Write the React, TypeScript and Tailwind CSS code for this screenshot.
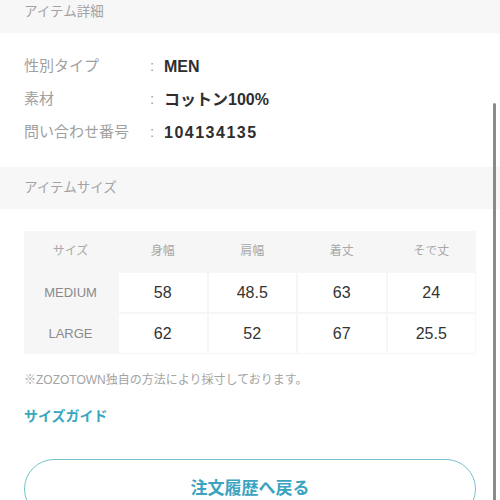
const FONT = { fontFamily: '"Liberation Sans", "Noto Sans CJK JP", sans-serif' };

const details = [
  { label: "性別タイプ", value: "MEN", wide: false },
  { label: "素材", value: "コットン100%", wide: false },
  { label: "問い合わせ番号", value: "104134135", wide: true },
];

const columns = ["サイズ", "身幅", "肩幅", "着丈", "そで丈"];

const rows = [
  { size: "MEDIUM", values: ["58", "48.5", "63", "24"] },
  { size: "LARGE", values: ["62", "52", "67", "25.5"] },
];

function SectionHeader({ title, className = "" }: { title: string; className?: string }) {
  return (
    <div className={`flex h-[42px] items-center bg-[#f7f7f7] px-6 text-[13.5px] text-[#a3a3a3] ${className}`}>
      {title}
    </div>
  );
}

export default function App() {
  return (
    <div className="relative h-[500px] w-[500px] overflow-hidden bg-white" style={FONT}>
      <SectionHeader title="アイテム詳細" className="-mt-[9px]" />

      <dl className="px-6 pt-[17px] pb-[18px]">
        {details.map((item) => (
          <div key={item.label} className="flex h-[33px] items-center">
            <dt className="w-[126px] text-[15px] text-[#a0a0a0]">{item.label}</dt>
            <span className="w-[14px] text-[15px] text-[#a0a0a0]">:</span>
            <dd
              className={`text-[16px] font-semibold text-[#2e2e2e] ${item.wide ? "tracking-[1.5px]" : ""}`}
            >
              {item.value}
            </dd>
          </div>
        ))}
      </dl>

      <SectionHeader title="アイテムサイズ" />

      <div className="px-6 pt-[22px]">
        <div className="grid grid-cols-[93px_1fr_1fr_1fr_1fr] gap-[2px] bg-[#f6f6f6] pr-px pb-px">
          {columns.map((col) => (
            <div
              key={col}
              className="flex h-[40px] items-center justify-center text-[12px] text-[#a8a8a8]"
            >
              {col}
            </div>
          ))}
          {rows.map((row) => (
            <>
              <div
                key={row.size}
                className="flex h-[39px] items-center justify-center text-[13px] text-[#8a8a8a]"
              >
                {row.size}
              </div>
              {row.values.map((v, i) => (
                <div
                  key={row.size + i}
                  className="flex h-[39px] items-center justify-center bg-white text-[16px] text-[#333]"
                >
                  {v}
                </div>
              ))}
            </>
          ))}
        </div>

        <p className="mt-[17px] text-[12px] leading-[18px] text-[#a3a3a3]">
          ※ZOZOTOWN独自の方法により採寸しております。
        </p>

        <a className="mt-[18px] block text-[14px] font-bold leading-[18px] text-[#3aa7c0]">
          サイズガイド
        </a>

        <button className="mt-[34px] flex h-[60px] w-full items-center justify-center rounded-full border border-[#76bfd0] text-[17px] font-bold text-[#3aa3c0]">
          注文履歴へ戻る
        </button>
      </div>

      <div className="absolute top-[103px] right-[4px] h-[420px] w-[3px] rounded-full bg-[#8a8a8a]" />
    </div>
  );
}
